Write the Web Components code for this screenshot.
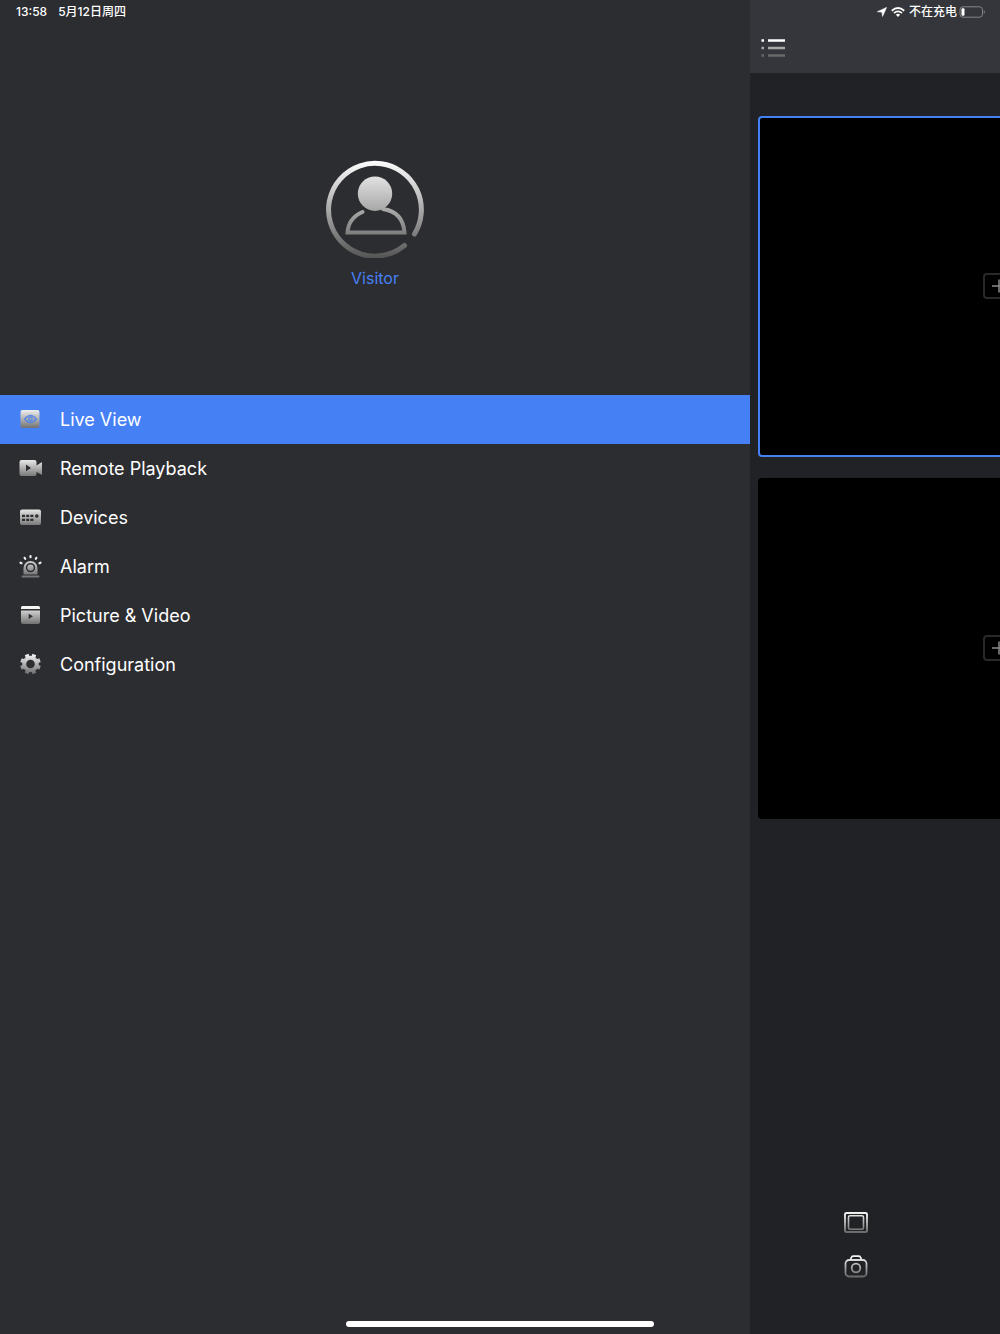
<!DOCTYPE html>
<html lang="en">
<head>
<meta charset="utf-8">
<meta name="viewport" content="width=device-width, initial-scale=1">
<title>Live View</title>
<style>
  html, body { margin: 0; height: 100%; }
  body {
    background: #2c2d31;
    color: #fff;
    font-family: Inter, "Noto Sans CJK SC", sans-serif;
    overflow: hidden;
  }
</style>
</head>
<body>
<viewer-app></viewer-app>
<script>
  const define = (name, markup) => {
    const template = document.createElement('template');
    template.innerHTML = markup;
    customElements.define(name, class extends HTMLElement {
      constructor() {
        super();
        this.attachShadow({ mode: 'open' }).append(template.content.cloneNode(true));
      }
    });
  };

  // Menu and toolbar glyphs; "url(#g)" is the vertical silver gradient of each icon.
  const icons = {
    live: `<path fill="url(#g)" d="M5 3h14.500a2 2 0 0 1 2 2v14a2 2 0 0 1-2 2H4.500a2 2 0 0 1-2-2V5a2 2 0 0 1 2-2z"/>
      <path d="M6.800 12q5.700-7 11.400 0q-5.700 7-11.400 0z" fill="none" stroke="#5b88e0" stroke-width="1.500"/>
      <circle cx="12.500" cy="12" r="1.700" fill="none" stroke="#5b88e0" stroke-width="1.500"/>`,
    playback: `<path fill="url(#g)" fill-rule="evenodd" d="M3.500 4h13a2 2 0 0 1 2 2v3.500L24 6v13l-5.500-3v2a2 2 0 0 1-2 2h-13a2 2 0 0 1-2-2V6a2 2 0 0 1 2-2zM8 8.500v6.800l5-3.400z"/>`,
    devices: `<path fill="url(#g)" d="M4 4.500h17a2 2 0 0 1 2 2v11.500a2 2 0 0 1-2 2H4a2 2 0 0 1-2-2v-11.500a2 2 0 0 1 2-2z"/>
      <path fill="#2c2d31" d="M4 9.700h3v2.300H4zM8.200 9.700h3v2.300h-3zM12.400 9.700h3v2.300h-3zM4 13.800h3v2.300H4zM8.200 13.800h3v2.300h-3zM12.400 13.800h3v2.300h-3z"/><circle cx="18.800" cy="11" r="1.800" fill="#2c2d31"/>`,
    alarm: `<path fill="url(#g)" fill-rule="evenodd" d="M5.500 20.500v-6.500a7 7 0 0 1 14 0v6.500zM12.500 8.900a4.700 4.700 0 1 0 0 9.400a4.700 4.700 0 0 0 0-9.400zm0 1.500a3.200 3.200 0 1 1 0 6.400a3.200 3.200 0 0 1 0-6.400z"/>
      <path fill="none" stroke="#eee" stroke-width="2.200" stroke-linecap="round" d="M12.500 2v1.200M6.600 3.800l.6 1M18.400 3.800l-.6 1M2.500 8.700l1 .5M22.500 8.700l-1 .5"/>
      <path stroke="#777" stroke-width="2" stroke-linecap="round" d="M4.500 22.500h16"/>`,
    media: `<path fill="#f5f5f5" d="M4.500 3h16q1.500 0 1.500 1.500V6h-19V4.500Q3 3 4.500 3z"/>
      <path fill="url(#g)" fill-rule="evenodd" d="M3 7.500h19V19a2 2 0 0 1-2 2H5a2 2 0 0 1-2-2zM10.700 10.700v5.200l4.200-2.600z"/>`,
    config: `<g fill="none" stroke="url(#g)"><circle cx="12.500" cy="12" r="6.300" stroke-width="4"/>
      <path stroke-width="4" d="M15.200 18.500l1.200 3M19 14.700l3 1.200M19 9.300l3-1.200M15.200 5.500l1.200-3M9.800 5.500l-1.200-3M6 9.300l-3-1.200M6 14.700l-3 1.200M9.800 18.500l-1.200 3"/></g>`,
    layout: `<g fill="none" stroke="url(#g)"><rect x="2" y="3" width="22" height="19" rx="1.500" stroke-width="2"/><rect x="5.500" y="5.700" width="15" height="13.600" rx="1.500" stroke-width="1.600"/></g>`,
    camera: `<g fill="none" stroke="url(#g)" stroke-width="1.800"><rect x="2.500" y="6" width="21" height="16.500" rx="3.500"/><path d="M7.500 5.700l.8-2q.5-1.500 2-1.500h5.400q1.500 0 2 1.500l.8 2"/><circle cx="13" cy="14" r="4.300"/></g>`
  };

  customElements.define('silver-icon', class extends HTMLElement {
    constructor() {
      super();
      this.attachShadow({ mode: 'open' });
    }
    connectedCallback() {
      this.shadowRoot.innerHTML = `
        <style>:host { display: block; flex: none; width: 26px; height: 24px; } svg { display: block; overflow: visible; }</style>
        <svg width="26" height="24" viewBox="0 1 26 24" aria-hidden="true">
          <defs><linearGradient id="g" gradientUnits="userSpaceOnUse" x1="0" y1="2" x2="0" y2="22">
            <stop offset="0" stop-color="#f6f6f6"/><stop offset="1" stop-color="#6b6b6b"/>
          </linearGradient></defs>
          ${icons[this.getAttribute('name')]}
        </svg>`;
    }
  });

  define('status-bar', `
    <style>
      :host { display: flex; justify-content: space-between; align-items: center; height: 24px; padding: 0 14px 0 16px; font-size: 12px; font-weight: 500; line-height: 24px; }
      div { display: flex; align-items: center; }
      .when { gap: 11px; }
      .state { gap: 4px; }
      .power { gap: 2px; }
      svg { display: block; }
    </style>
    <div class="when"><span>13:58</span><span>5月12日周四</span></div>
    <div class="state">
      <svg width="10" height="10" viewBox="0 0 10 10" aria-hidden="true"><path fill="#fff" stroke="#fff" stroke-width=".6" stroke-linejoin="round" d="M9.600.4L5.500 9.400L5 5.100L.4 4.700z"/></svg>
      <svg width="14" height="10" viewBox="0 0 14 10" aria-hidden="true"><g fill="none" stroke="#fff" stroke-width="1.800"><path d="M.8 3.700q6.200-5.400 12.400 0"/><path d="M3 6.100q4-3.400 8 0"/></g><path fill="#fff" d="M4.900 7.700q2.100-1.700 4.200 0L7 9.900z"/></svg>
      <div class="power"><span>不在充电</span>
      <svg width="27" height="12" viewBox="0 0 27 12" aria-hidden="true"><rect x="1" y=".8" width="22.500" height="10.400" rx="3" fill="none" stroke="#85868a"/><path fill="#85868a" d="M24.800 4q2 2 0 4z"/><rect x="2.500" y="2.300" width="3" height="7.400" rx="1" fill="#fff"/></svg></div>
    </div>`);

  define('user-card', `
    <style>
      :host { display: block; padding-top: 160px; height: 235px; }
      button { display: flex; flex-direction: column; align-items: center; gap: 10px; width: 100%; margin: 0; padding: 0; border: 0; background: none; color: #4680f5; font: inherit; font-size: 16px; line-height: 20px; }
      svg { display: block; }
    </style>
    <button type="button">
      <svg width="98" height="98" viewBox="0 0 98 98" aria-hidden="true">
        <defs><linearGradient id="g" gradientUnits="userSpaceOnUse" x1="0" y1="0" x2="0" y2="98"><stop offset="0" stop-color="#fff"/><stop offset="1" stop-color="#555"/></linearGradient></defs>
        <g fill="none" stroke="url(#g)" stroke-linecap="round">
          <path stroke-width="5" d="M78.500 85.500A46.400 46.400 0 1 1 88.500 74"/>
          <path stroke-width="4" d="M36.500 52Q22.500 58 21.500 72.500H78.500Q77 52 57 49"/>
        </g>
        <circle cx="49" cy="33.700" r="17.200" fill="url(#g)"/>
      </svg>
      <span>Visitor</span>
    </button>`);

  define('menu-item', `
    <style>
      :host { display: block; }
      a { display: flex; align-items: center; gap: 16px; height: 49px; padding: 0 18px; color: #fff; font-size: 18px; line-height: 24px; text-decoration: none; }
      :host([active]) a { background: #4680f5; }
    </style>
    <a href="#"><slot name="icon"></slot><span><slot></slot></span></a>`);

  define('side-drawer', `
    <style>
      :host { display: block; background: #2c2d31; }
      nav { display: flex; flex-direction: column; }
    </style>
    <user-card></user-card>
    <nav aria-label="Main">
      <menu-item active><silver-icon slot="icon" name="live"></silver-icon>Live View</menu-item>
      <menu-item><silver-icon slot="icon" name="playback"></silver-icon>Remote Playback</menu-item>
      <menu-item><silver-icon slot="icon" name="devices"></silver-icon>Devices</menu-item>
      <menu-item><silver-icon slot="icon" name="alarm"></silver-icon>Alarm</menu-item>
      <menu-item><silver-icon slot="icon" name="media"></silver-icon>Picture &amp; Video</menu-item>
      <menu-item><silver-icon slot="icon" name="config"></silver-icon>Configuration</menu-item>
    </nav>`);

  define('camera-tile', `
    <style>
      :host { display: flex; align-items: center; justify-content: center; box-sizing: border-box; aspect-ratio: 484 / 341; padding-bottom: 2px; background: #000; border: 2px solid #000; border-radius: 4px; }
      :host([selected]) { border-color: #4680f5; }
      button { display: flex; align-items: center; justify-content: center; box-sizing: border-box; width: 34px; height: 26px; margin: 0; padding: 0; border: 2px solid #29292b; border-radius: 4px; background: none; }
    </style>
    <button type="button" aria-label="Add camera"><svg width="16" height="14" viewBox="0 0 16 14" aria-hidden="true"><path d="M7 .5v13M0 7h14" stroke="#8b8b8b" stroke-width="1.500"/></svg></button>`);

  // The page behind the drawer keeps the full window width and is cut off at the right edge.
  define('live-stage', `
    <style>
      :host { display: flex; flex-direction: column; background: #212226; overflow: hidden; }
      header { display: flex; align-items: flex-end; height: 73px; box-sizing: border-box; padding: 0 11px 13px; background: #35363b; }
      button { display: block; margin: 0; padding: 0; border: 0; background: none; }
      header svg { display: block; }
      .grid { display: grid; grid-template-columns: 1fr 1fr; gap: 21px 16px; width: 100vw; box-sizing: border-box; padding: 43px 8px 0; }
      camera-tile { grid-column: 1; }
      .tools { display: flex; flex-direction: column; align-items: flex-start; gap: 20px; margin-top: auto; padding: 0 93px 55px; }
    </style>
    <header><button type="button" aria-label="Menu">
      <svg width="24" height="24" viewBox="0 0 24 24" aria-hidden="true"><g stroke-width="2.400"><path stroke="#fff" d="M.5 4.500H3M7 4.500h17"/><path stroke="#aaa" d="M.5 12H3M7 12h17"/><path stroke="#68696b" d="M.5 19.500H3M7 19.500h17"/></g></svg>
    </button></header>
    <div class="grid"><camera-tile selected></camera-tile><camera-tile></camera-tile></div>
    <div class="tools">
      <button type="button" aria-label="Window division"><silver-icon name="layout"></silver-icon></button>
      <button type="button" aria-label="Capture"><silver-icon name="camera"></silver-icon></button>
    </div>`);

  define('viewer-app', `
    <style>
      :host { display: grid; grid-template-columns: 3fr 1fr; min-height: 100vh; position: relative; }
      live-stage { min-width: 0; }
      status-bar { position: absolute; inset: 0 0 auto; }
      .home { position: absolute; inset: auto 0 7px; width: 308px; height: 6px; margin: 0 auto; border-radius: 3px; background: #fff; }
    </style>
    <side-drawer></side-drawer>
    <live-stage></live-stage>
    <status-bar></status-bar>
    <div class="home"></div>`);
</script>
</body>
</html>
